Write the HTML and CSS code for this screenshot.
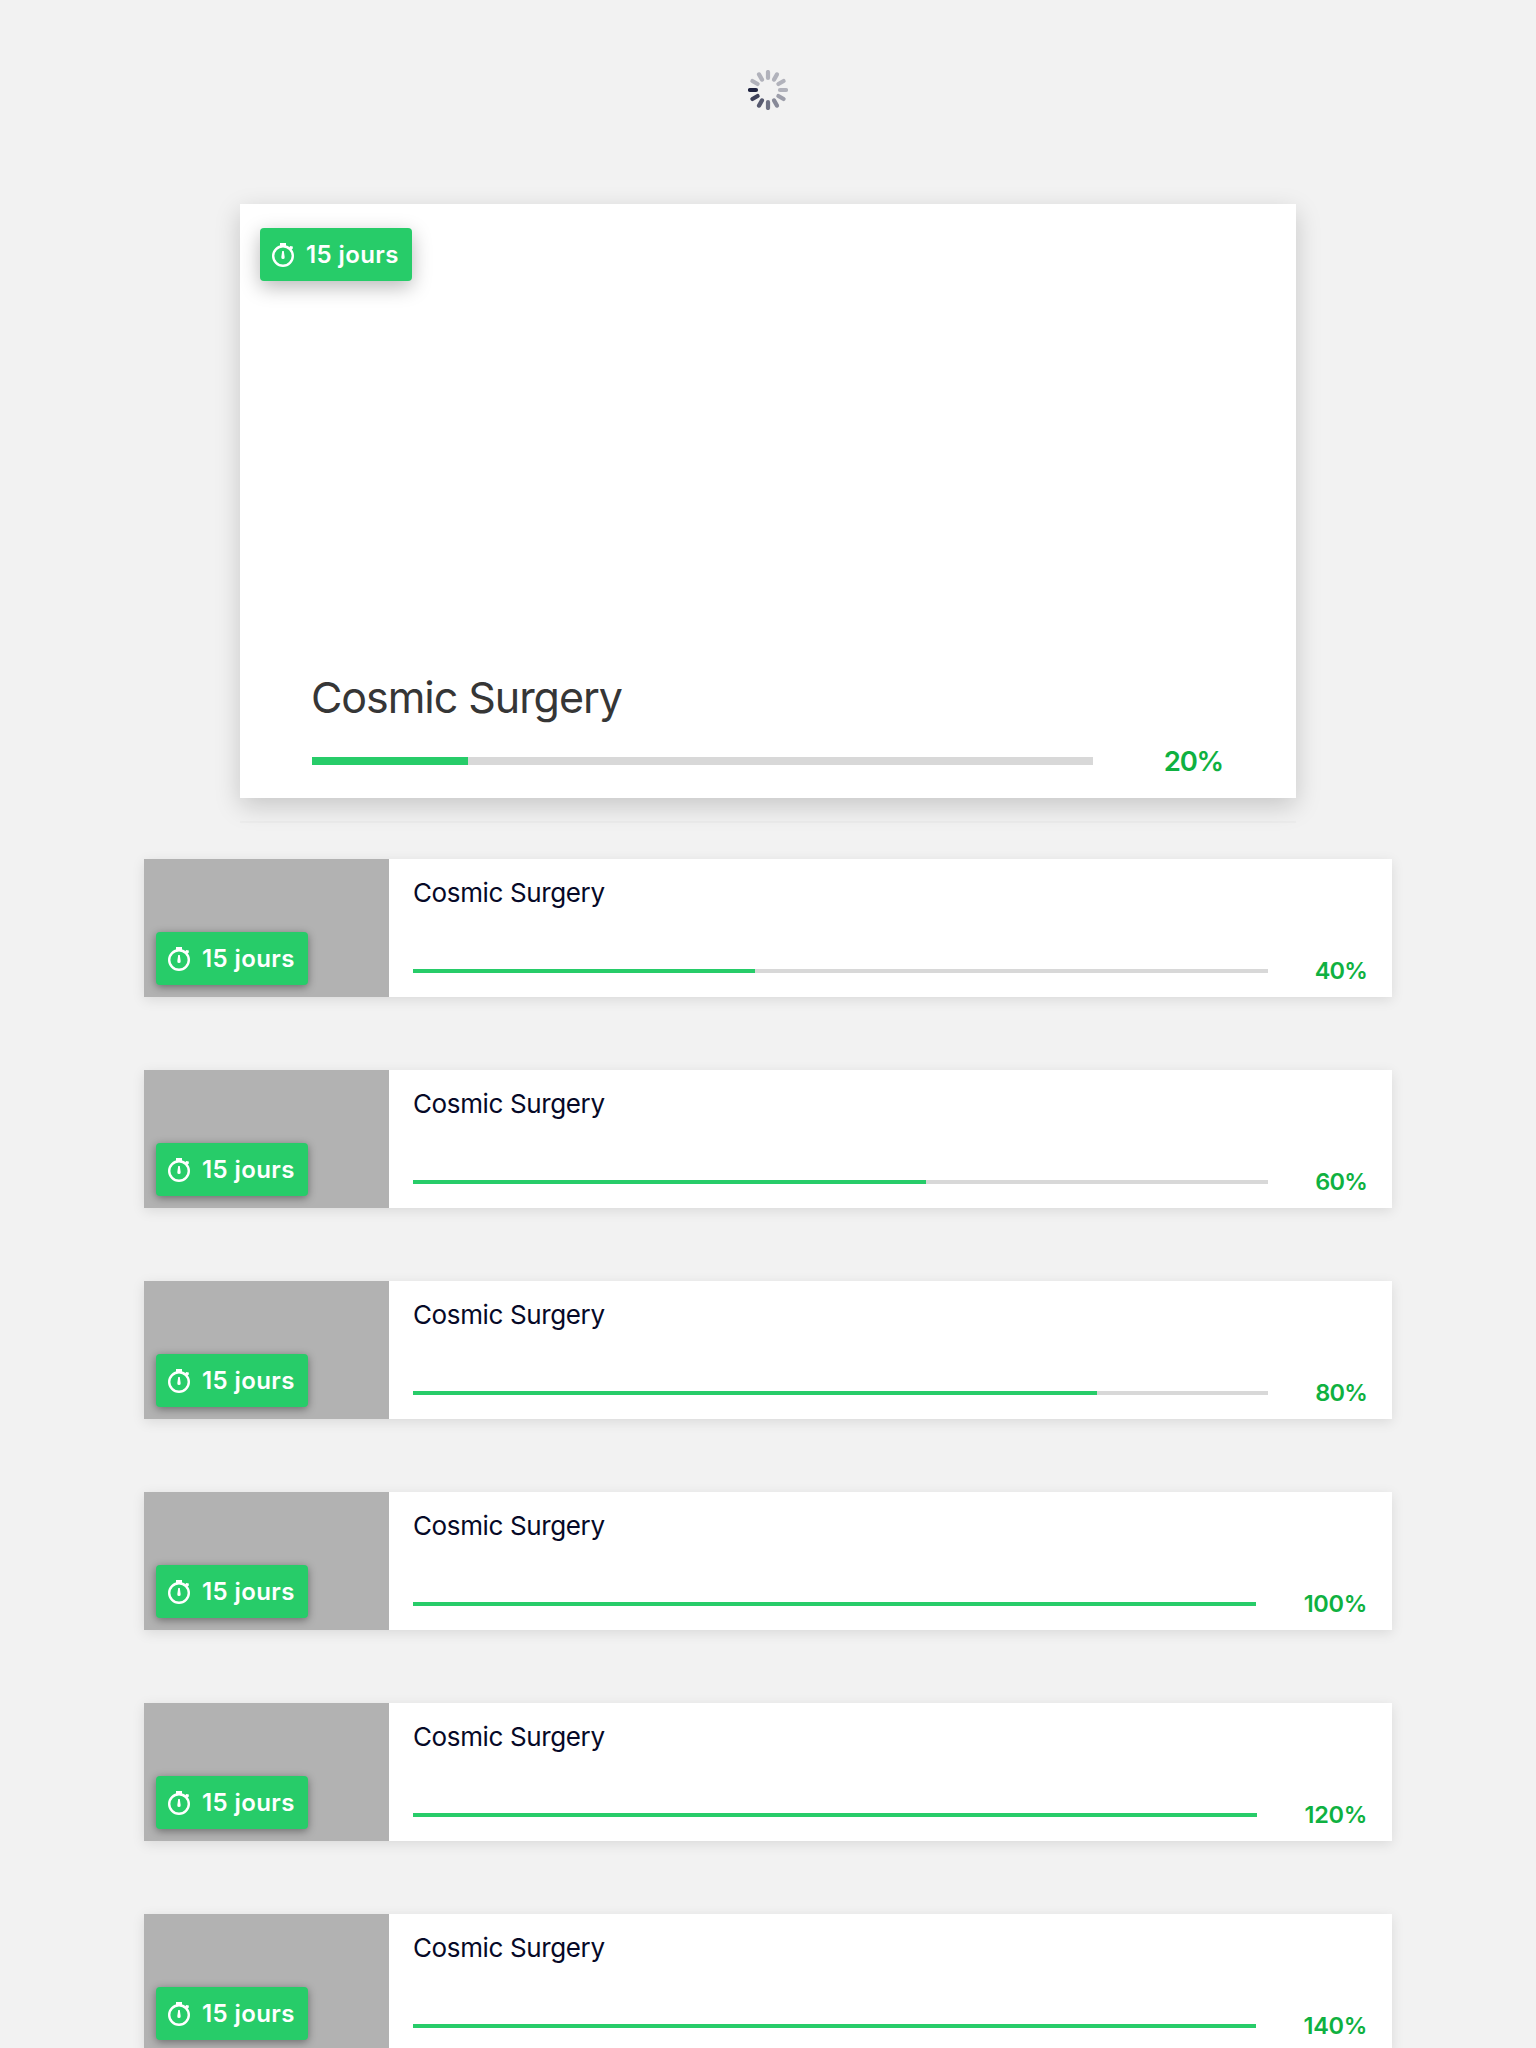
FILE: index.html
```html
<!DOCTYPE html>
<html lang="fr">
<head>
<meta charset="utf-8">
<title>Projets</title>
<link rel="stylesheet" href="styles.css">
</head>
<body>
<svg class="defs" width="0" height="0">
  <symbol id="timer" viewBox="0 0 22 24">
    <circle cx="11" cy="13" r="9.800" fill="none" stroke="#fff" stroke-width="2.400"/>
    <path d="M8 0h6v3.500H8zM17 4.600l1.300-1.500 2.500.5v2l-1.300 1.200zM10.200 8h1.600l.9 6.200a1.700 1.900 0 0 1-3.400 0z" fill="#fff"/>
  </symbol>
</svg>
<main class="page">
  <svg class="spinner" viewBox="-20 -20 40 40" stroke-width="4.200" stroke-linecap="round" stroke="#1f2340">
    <path d="M-12 0H-18"/>
    <path d="M-12 0H-18" transform="rotate(-30)" opacity=".85"/>
    <path d="M-12 0H-18" transform="rotate(-60)" opacity=".73"/>
    <path d="M-12 0H-18" transform="rotate(-90)" opacity=".62"/>
    <path d="M-12 0H-18" transform="rotate(-120)" opacity=".5"/>
    <path d="M-12 0H-18" transform="rotate(-150)" opacity=".4"/>
    <path d="M-12 0H-18" transform="rotate(-180)" opacity=".3"/>
    <path d="M-12 0H-18" transform="rotate(-210)" opacity=".3"/>
    <path d="M-12 0H-18" transform="rotate(-240)" opacity=".3"/>
    <path d="M-12 0H-18" transform="rotate(-270)" opacity=".3"/>
    <path d="M-12 0H-18" transform="rotate(-300)" opacity=".3"/>
    <path d="M-12 0H-18" transform="rotate(-330)" opacity=".3"/>
  </svg>
  <div class="featured">
  <article class="hero">
    <span class="badge"><svg class="timer"><use href="#timer"/></svg><span>15 jours</span></span>
    <div class="hero-body">
      <h1 class="hero-title">Cosmic Surgery</h1>
      <div class="progress"><div class="track"><div class="fill" style="width:20%"></div></div><span class="percent">20%</span></div>
    </div>
  </article>
  </div>
  <section class="list">
    <article class="card">
      <div class="thumb"><span class="badge"><svg class="timer"><use href="#timer"/></svg><span>15 jours</span></span></div>
      <div class="body"><h2 class="title">Cosmic Surgery</h2><div class="progress"><div class="track"><div class="fill" style="width:40%"></div></div><span class="percent">40%</span></div></div>
    </article>
    <article class="card">
      <div class="thumb"><span class="badge"><svg class="timer"><use href="#timer"/></svg><span>15 jours</span></span></div>
      <div class="body"><h2 class="title">Cosmic Surgery</h2><div class="progress"><div class="track"><div class="fill" style="width:60%"></div></div><span class="percent">60%</span></div></div>
    </article>
    <article class="card">
      <div class="thumb"><span class="badge"><svg class="timer"><use href="#timer"/></svg><span>15 jours</span></span></div>
      <div class="body"><h2 class="title">Cosmic Surgery</h2><div class="progress"><div class="track"><div class="fill" style="width:80%"></div></div><span class="percent">80%</span></div></div>
    </article>
    <article class="card">
      <div class="thumb"><span class="badge"><svg class="timer"><use href="#timer"/></svg><span>15 jours</span></span></div>
      <div class="body"><h2 class="title">Cosmic Surgery</h2><div class="progress"><div class="track"><div class="fill" style="width:100%"></div></div><span class="percent wide">100%</span></div></div>
    </article>
    <article class="card">
      <div class="thumb"><span class="badge"><svg class="timer"><use href="#timer"/></svg><span>15 jours</span></span></div>
      <div class="body"><h2 class="title">Cosmic Surgery</h2><div class="progress"><div class="track"><div class="fill" style="width:100%"></div></div><span class="percent wide narrow">120%</span></div></div>
    </article>
    <article class="card">
      <div class="thumb"><span class="badge"><svg class="timer"><use href="#timer"/></svg><span>15 jours</span></span></div>
      <div class="body"><h2 class="title">Cosmic Surgery</h2><div class="progress"><div class="track"><div class="fill" style="width:100%"></div></div><span class="percent wide">140%</span></div></div>
    </article>
  </section>
</main>
</body>
</html>
```
FILE: styles.css
```css
* { box-sizing: border-box; }
body { margin: 0; background: #f2f2f2; font-family: Inter, "Liberation Sans", sans-serif; }
.defs { display: none; }
.page { height: 2048px; overflow: hidden; padding-top: 70px; display: flex; flex-direction: column; align-items: center; }
.spinner { width: 40px; height: 40px; flex: none; }
.featured { flex: none; width: 1056px; height: 619px; margin-top: 94px; border-bottom: 2px solid #ededed; }
.hero { height: 594px; padding: 24px 20px; background: #fff; display: flex; flex-direction: column; justify-content: space-between; align-items: flex-start; box-shadow: 0 8px 24px rgba(0,0,0,.18); }
.badge { display: flex; align-items: center; gap: 12px; width: 152px; height: 53px; padding-left: 12px; border-radius: 4px; background: #27cc69; color: #fff; font-size: 24px; font-weight: 600; letter-spacing: .4px; line-height: 53px; white-space: nowrap; box-shadow: 0 6px 20px rgba(0,0,0,.28); }
.timer { width: 22px; height: 24px; flex: none; }
.hero-body { align-self: stretch; padding: 0 52px; }
.hero-title { margin: 0 0 25px -1px; font-size: 43px; line-height: 52px; font-weight: 400; letter-spacing: -1.05px; color: #363636; white-space: nowrap; }
.progress { display: flex; align-items: center; }
.track { flex: 1; height: 4px; background: #d8d8d8; }
.fill { height: 100%; background: #27cc69; }
.percent { width: 100px; padding-right: 1px; text-align: right; font-size: 23.5px; line-height: 26px; font-weight: 600; letter-spacing: -.8px; color: #0fb141; }
.percent.wide { width: 112px; letter-spacing: -.3px; }
.percent.wide.narrow { width: 111px; }
.hero .track { height: 8px; }
.hero .percent { width: 131px; font-size: 27.5px; letter-spacing: -1.2px; }
.list { flex: none; width: 1248px; margin-top: 36px; display: flex; flex-direction: column; gap: 73px; }
.card { display: flex; height: 138px; background: #fff; box-shadow: 0 3px 12px rgba(0,0,0,.1); }
.thumb { width: 245px; padding: 0 12px 12px; background: #b2b2b2; display: flex; align-items: flex-end; }
.thumb .badge { box-shadow: 0 2px 8px rgba(0,0,0,.4); }
.body { flex: 1; padding: 18px 24px 13px; display: flex; flex-direction: column; justify-content: space-between; }
.title { margin: 0; font-size: 26px; line-height: 32px; font-weight: 400; letter-spacing: -.37px; color: #060927; white-space: nowrap; }
```
